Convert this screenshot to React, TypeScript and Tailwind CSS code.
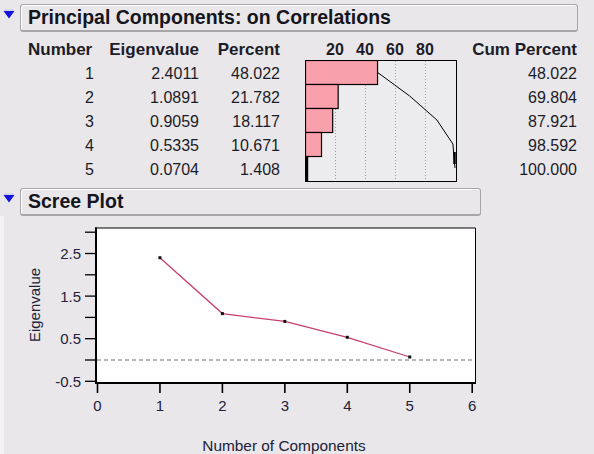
const rows = [
  { n: 1, eig: '2.4011', pct: 48.022, cum: '48.022', cumV: 48.022 },
  { n: 2, eig: '1.0891', pct: 21.782, cum: '69.804', cumV: 69.804 },
  { n: 3, eig: '0.9059', pct: 18.117, cum: '87.921', cumV: 87.921 },
  { n: 4, eig: '0.5335', pct: 10.671, cum: '98.592', cumV: 98.592 },
  { n: 5, eig: '0.0704', pct: 1.408, cum: '100.000', cumV: 100 },
]

const eigen = [2.4011, 1.0891, 0.9059, 0.5335, 0.0704]

function Disclosure() {
  return (
    <svg width="12" height="10" viewBox="0 0 12 10" className="mt-[5px] ml-[3px] shrink-0">
      <path d="M1 1 H11" stroke="#b9c4f0" strokeWidth="1" />
      <polygon points="0.5,2 11.5,2 6,9.5" fill="#1414d8" />
    </svg>
  )
}

function OutlineHeader({ title, width }: { title: string; width: string }) {
  return (
    <div className="flex items-start">
      <Disclosure />
      <div
        className={`${width} ml-[5px] h-[28px] rounded-[3px] border border-b-2 border-[#a6a6a8] bg-[#e9e7ea] pl-[7px] text-[19.5px] font-bold leading-[25px] text-[#151520] shadow-[inset_1px_1px_0_#ffffff]`}
      >
        {title}
      </div>
    </div>
  )
}

function BarChart() {
  const grid = [30, 60, 90, 120]
  const pts = rows.map((r, i) => `${(r.cumV * 1.5).toFixed(1)},${i * 24 + 12}`).join(' ')
  return (
    <svg width="152" height="122" viewBox="0 0 152 122">
      <rect x="0.5" y="0.5" width="151" height="121" fill="#ecebee" stroke="#000" />
      {grid.map((x) => (
        <line key={x} x1={x + 0.5} y1="1" x2={x + 0.5} y2="121" stroke="#ec7f8c" strokeDasharray="1 2" />
      ))}
      {rows.map((r, i) => (
        <rect
          key={r.n}
          x="0.5"
          y={i * 24 + 0.5}
          width={Math.max(r.pct * 1.5, 1.5)}
          height="24"
          fill="#f8a0ab"
          stroke="#000"
          strokeWidth="1.2"
        />
      ))}
      <polyline points={pts} fill="none" stroke="#000" strokeWidth="1" />
      <line x1="149.5" y1="92" x2="149.5" y2="104" stroke="#000" strokeWidth="2.5" />
      <line x1="1.5" y1="96" x2="1.5" y2="121" stroke="#000" strokeWidth="2.5" />
    </svg>
  )
}

function ScreePlot() {
  const yOf = (v: number) => 144 - v * 42.6
  const xOf = (k: number) => 97.5 + k * 62.45
  const yTicks = [3, 2.5, 2, 1.5, 1, 0.5, 0, -0.5]
  const yLabels: Record<string, string> = { '2.5': '2.5', '1.5': '1.5', '0.5': '0.5', '-0.5': '-0.5' }
  const line = eigen.map((v, i) => `${xOf(i + 1).toFixed(1)},${yOf(v).toFixed(1)}`).join(' ')
  return (
    <svg width="590" height="238" viewBox="4 0 590 238" className="block">
      <rect x="95" y="12" width="380" height="155" fill="#fff" />
      <line x1="95" y1="12" x2="475.5" y2="12" stroke="#000" />
      <line x1="475.5" y1="12" x2="475.5" y2="167" stroke="#000" />
      <line x1="96" y1="11.5" x2="96" y2="168" stroke="#000" strokeWidth="2" />
      <line x1="95" y1="167" x2="476" y2="167" stroke="#000" strokeWidth="2" />
      <line x1="97" y1="144" x2="472" y2="144" stroke="#707070" strokeWidth="1.2" strokeDasharray="4 3" />
      {yTicks.map((v) => (
        <line key={v} x1="85" y1={yOf(v)} x2="95" y2={yOf(v)} stroke="#000" strokeWidth="1.3" />
      ))}
      {yTicks
        .filter((v) => yLabels[String(v)])
        .map((v) => (
          <text key={v} x="81" y={yOf(v) + 5.5} textAnchor="end" fontSize="15" fill="#22223a" fontFamily="'Liberation Sans', Arial, sans-serif">
            {yLabels[String(v)]}
          </text>
        ))}
      {[0, 1, 2, 3, 4, 5, 6].map((k) => (
        <g key={k}>
          <line x1={xOf(k)} y1="167" x2={xOf(k)} y2="177" stroke="#000" strokeWidth="1.6" />
          <text x={xOf(k)} y="195" textAnchor="middle" fontSize="15" fill="#22223a" fontFamily="'Liberation Sans', Arial, sans-serif">
            {k}
          </text>
        </g>
      ))}
      <polyline points={line} fill="none" stroke="#c8406c" strokeWidth="1.3" />
      {eigen.map((v, i) => (
        <rect key={i} x={xOf(i + 1) - 1.5} y={yOf(v) - 1.5} width="3" height="3" fill="#111" />
      ))}
      <text
        x="0"
        y="0"
        transform="translate(40 89) rotate(-90)"
        textAnchor="middle"
        fontSize="15"
        fill="#22223a"
        fontFamily="'Liberation Sans', Arial, sans-serif"
      >
        Eigenvalue
      </text>
      <text x="284" y="235" textAnchor="middle" fontSize="15.4" fill="#22223a" fontFamily="'Liberation Sans', Arial, sans-serif">
        Number of Components
      </text>
    </svg>
  )
}

export default function App() {
  return (
    <div className="h-[454px] w-[594px] overflow-hidden bg-[#e9e7ea] pt-[4px] font-['Liberation_Sans',Arial,sans-serif] text-[#1c1c28]">
      <OutlineHeader title="Principal Components: on Correlations" width="w-[558px]" />

      <div className="mt-[6px] flex pl-[28px]">
        <div className="flex w-[66px] flex-col items-end">
          <div className="h-[24px] w-full text-[17px] font-bold leading-[24px]">Number</div>
          {rows.map((r) => (
            <div key={r.n} className="h-[24px] text-[16px] leading-[24px]">{r.n}</div>
          ))}
        </div>
        <div className="ml-[16px] flex w-[89px] flex-col items-end">
          <div className="h-[24px] text-[17px] font-bold leading-[24px]">Eigenvalue</div>
          {rows.map((r) => (
            <div key={r.n} className="h-[24px] text-[16px] leading-[24px]">{r.eig}</div>
          ))}
        </div>
        <div className="ml-[17px] flex w-[64px] flex-col items-end">
          <div className="h-[24px] text-[17px] font-bold leading-[24px]">Percent</div>
          {rows.map((r) => (
            <div key={r.n} className="h-[24px] text-[16px] leading-[24px]">{r.pct.toFixed(3)}</div>
          ))}
        </div>
        <div className="ml-[25px] flex w-[152px] flex-col">
          <div className="flex h-[22px] pl-[15px] text-[16px] font-bold leading-[24px]">
            {['20', '40', '60', '80'].map((t) => (
              <span key={t} className="w-[30px] text-center">{t}</span>
            ))}
          </div>
          <BarChart />
        </div>
        <div className="ml-[11px] flex w-[109px] flex-col items-end">
          <div className="h-[24px] text-[17px] font-bold leading-[24px]">Cum Percent</div>
          {rows.map((r) => (
            <div key={r.n} className="h-[24px] text-[16px] leading-[24px]">{r.cum}</div>
          ))}
        </div>
      </div>

      <div className="mt-[6px]">
        <OutlineHeader title="Scree Plot" width="w-[461px]" />
      </div>

      <div className="border-l-4 border-[#f3f2f4]">
        <ScreePlot />
      </div>
    </div>
  )
}
